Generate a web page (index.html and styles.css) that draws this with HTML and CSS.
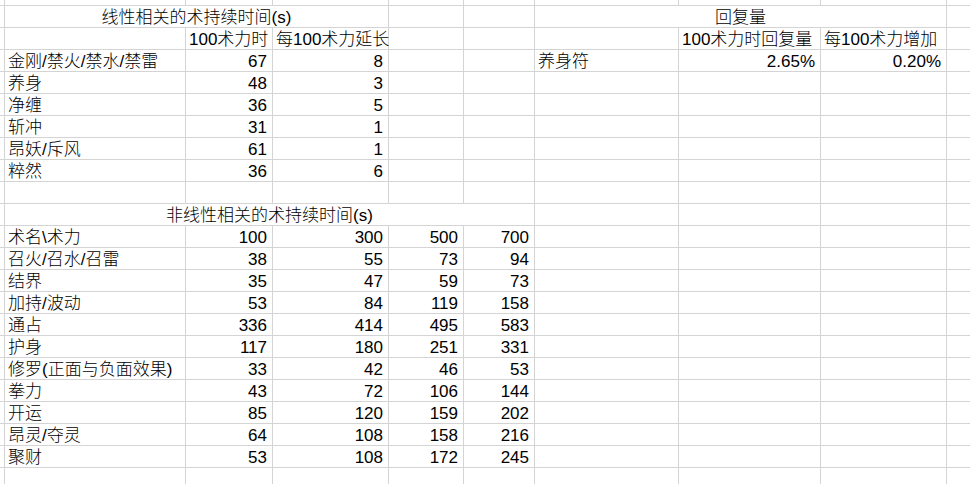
FILE: index.html
```html
<!DOCTYPE html>
<html lang="zh-CN">
<head>
<meta charset="utf-8">
<title>术持续时间</title>
<link rel="stylesheet" href="styles.css">
</head>
<body>
<div class="sheet">
  <!-- row 0 -->
  <div></div><div></div><div></div><div></div><div></div><div></div><div></div><div></div><div></div><div></div>
  <!-- row 1 -->
  <div></div><div class="c span3">线性相关的术持续时间(s)</div><div></div><div></div><div class="c span3">回复量</div><div></div>
  <!-- row 2 -->
  <div></div><div></div><div class="h">100术力时</div><div class="h">每100术力延长</div><div></div><div></div><div></div><div class="h">100术力时回复量</div><div class="h">每100术力增加</div><div></div>
  <!-- row 3 -->
  <div></div><div class="t">金刚/禁火/禁水/禁雷</div><div class="n">67</div><div class="n">8</div><div></div><div></div><div class="t">养身符</div><div class="n">2.65%</div><div class="n">0.20%</div><div></div>
  <!-- row 4 -->
  <div></div><div class="t">养身</div><div class="n">48</div><div class="n">3</div><div></div><div></div><div></div><div></div><div></div><div></div>
  <!-- row 5 -->
  <div></div><div class="t">净缠</div><div class="n">36</div><div class="n">5</div><div></div><div></div><div></div><div></div><div></div><div></div>
  <!-- row 6 -->
  <div></div><div class="t">斩冲</div><div class="n">31</div><div class="n">1</div><div></div><div></div><div></div><div></div><div></div><div></div>
  <!-- row 7 -->
  <div></div><div class="t">昂妖/斥风</div><div class="n">61</div><div class="n">1</div><div></div><div></div><div></div><div></div><div></div><div></div>
  <!-- row 8 -->
  <div></div><div class="t">粹然</div><div class="n">36</div><div class="n">6</div><div></div><div></div><div></div><div></div><div></div><div></div>
  <!-- row 9 -->
  <div></div><div></div><div></div><div></div><div></div><div></div><div></div><div></div><div></div><div></div>
  <!-- row 10 -->
  <div></div><div class="c span5">非线性相关的术持续时间(s)</div><div></div><div></div><div></div><div></div>
  <!-- row 11 -->
  <div></div><div class="t">术名\术力</div><div class="n">100</div><div class="n">300</div><div class="n">500</div><div class="n">700</div><div></div><div></div><div></div><div></div>
  <!-- row 12 -->
  <div></div><div class="t">召火/召水/召雷</div><div class="n">38</div><div class="n">55</div><div class="n">73</div><div class="n">94</div><div></div><div></div><div></div><div></div>
  <!-- row 13 -->
  <div></div><div class="t">结界</div><div class="n">35</div><div class="n">47</div><div class="n">59</div><div class="n">73</div><div></div><div></div><div></div><div></div>
  <!-- row 14 -->
  <div></div><div class="t">加持/波动</div><div class="n">53</div><div class="n">84</div><div class="n">119</div><div class="n">158</div><div></div><div></div><div></div><div></div>
  <!-- row 15 -->
  <div></div><div class="t">通占</div><div class="n">336</div><div class="n">414</div><div class="n">495</div><div class="n">583</div><div></div><div></div><div></div><div></div>
  <!-- row 16 -->
  <div></div><div class="t">护身</div><div class="n">117</div><div class="n">180</div><div class="n">251</div><div class="n">331</div><div></div><div></div><div></div><div></div>
  <!-- row 17 -->
  <div></div><div class="t">修罗(正面与负面效果)</div><div class="n">33</div><div class="n">42</div><div class="n">46</div><div class="n">53</div><div></div><div></div><div></div><div></div>
  <!-- row 18 -->
  <div></div><div class="t">拳力</div><div class="n">43</div><div class="n">72</div><div class="n">106</div><div class="n">144</div><div></div><div></div><div></div><div></div>
  <!-- row 19 -->
  <div></div><div class="t">开运</div><div class="n">85</div><div class="n">120</div><div class="n">159</div><div class="n">202</div><div></div><div></div><div></div><div></div>
  <!-- row 20 -->
  <div></div><div class="t">昂灵/夺灵</div><div class="n">64</div><div class="n">108</div><div class="n">158</div><div class="n">216</div><div></div><div></div><div></div><div></div>
  <!-- row 21 -->
  <div></div><div class="t">聚财</div><div class="n">53</div><div class="n">108</div><div class="n">172</div><div class="n">245</div><div></div><div></div><div></div><div></div>
  <!-- row 22 -->
  <div></div><div></div><div></div><div></div><div></div><div></div><div></div><div></div><div></div><div></div>
</div>
</body>
</html>
```
FILE: styles.css
```css
html, body {
  margin: 0;
  padding: 0;
  background: #ffffff;
  overflow: hidden;
  height: 484px;
}
.sheet {
  display: grid;
  grid-template-columns: 4px 180px 86px 115px 74px 70px 143px 141px 125px 60px;
  grid-template-rows: 5px repeat(22, 21px);
  gap: 1px;
  background: #d4d4d4;
  width: max-content;
  font-family: "Liberation Sans", "Noto Sans CJK SC", sans-serif;
  font-size: 17px;
  font-weight: 300;
  line-height: 19px;
  color: #000;
}
.sheet > div {
  background: #ffffff;
  white-space: nowrap;
  overflow: visible;
  padding-top: 2px;
  box-sizing: border-box;
}
.t {
  padding-left: 3px;
  text-align: left;
}
.h {
  padding-left: 3px;
  text-align: left;
}
.n {
  padding-right: 5px;
  text-align: right;
}
.c {
  text-align: center;
}
.span3 {
  grid-column: span 3;
}
.span5 {
  grid-column: span 5;
}
```
